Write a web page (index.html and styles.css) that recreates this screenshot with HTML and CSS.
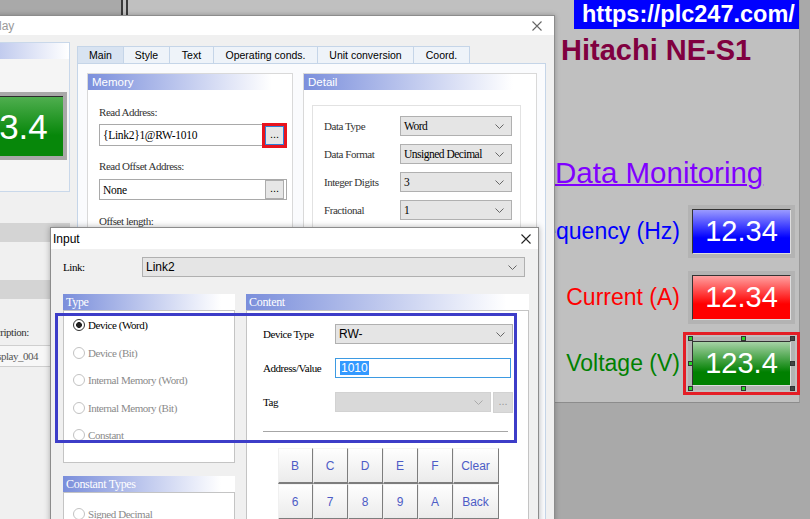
FILE: index.html
```html
<!DOCTYPE html>
<html lang="en">
<head>
  <meta charset="UTF-8">
  <title>Numeric Display - Input</title>
  <link rel="stylesheet" href="styles.css">
</head>
<body>
<div class="screen">

  <!-- HMI screen behind the dialogs -->
  <div class="hmi">
    <div class="hmi-side">
      <div class="url">https://plc247.com/</div>
      <div class="hmi-title">Hitachi NE-S1</div>
      <div class="hmi-head">Data Monitoring</div>
      <div class="mon-row first">
        <span class="mon-label c-blue">Frequency (Hz)</span>
        <div class="val"><div class="val-in v-blue">12.34</div></div>
      </div>
      <div class="mon-row">
        <span class="mon-label c-red">Current (A)</span>
        <div class="val"><div class="val-in v-red">12.34</div></div>
      </div>
      <div class="mon-row">
        <span class="mon-label c-green">Voltage (V)</span>
        <div class="val picked">
          <div class="val-in v-green">123.4</div>
          <span class="hd hd-tl"></span><span class="hd hd-tm"></span><span class="hd hd-tr"></span>
          <span class="hd hd-ml"></span><span class="hd hd-mr"></span>
          <span class="hd hd-bl"></span><span class="hd hd-bm"></span><span class="hd hd-br"></span>
        </div>
      </div>
    </div>
  </div>

  <!-- property dialog -->
  <div class="win win-prop">
    <div class="win-bar">
      <span class="win-title dim">Numeric Display</span>
      <svg class="x" width="10" height="10" viewBox="0 0 10 10"><path d="M0.5 0.5L9.5 9.5M9.5 0.5L0.5 9.5" stroke="#666" stroke-width="1.1"/></svg>
    </div>
    <div class="prop-body">
      <div class="prop-left">
        <div class="preview">
          <div class="preview-head"></div>
          <div class="big-val"><div class="big-val-in">123.4</div></div>
        </div>
        <div class="sec-bar"></div>
        <div class="sec-bar sec-bar2"></div>
        <div class="lbl desc-label">Description:</div>
        <div class="desc-box">Numeric Display_004</div>
      </div>

      <div class="prop-tabs">
        <div class="tabs">
          <div class="tab on w47">Main</div>
          <div class="tab w46">Style</div>
          <div class="tab w44">Text</div>
          <div class="tab w104">Operating conds.</div>
          <div class="tab w96">Unit conversion</div>
          <div class="tab w56">Coord.</div>
        </div>
        <div class="tab-panel">
          <div class="grp grp-mem">
            <div class="grp-head">Memory</div>
            <div class="mem-body">
              <div class="lbl">Read Address:</div>
              <div class="field">{Link2}1@RW-1010<span class="dots focus">...</span></div>
              <div class="lbl mt12">Read Offset Address:</div>
              <div class="field f21">None<span class="dots">...</span></div>
              <div class="lbl mt13">Offset length:</div>
            </div>
          </div>
          <div class="grp grp-det">
            <div class="grp-head">Detail</div>
            <div class="det-box">
              <div class="det-row"><span class="lbl">Data Type</span><div class="sel">Word<svg width="9" height="5"><polyline points="0.5,0.5 4.5,4.5 8.5,0.5" fill="none" stroke="#666"/></svg></div></div>
              <div class="det-row"><span class="lbl">Data Format</span><div class="sel">Unsigned Decimal<svg width="9" height="5"><polyline points="0.5,0.5 4.5,4.5 8.5,0.5" fill="none" stroke="#666"/></svg></div></div>
              <div class="det-row"><span class="lbl">Integer Digits</span><div class="sel">3<svg width="9" height="5"><polyline points="0.5,0.5 4.5,4.5 8.5,0.5" fill="none" stroke="#666"/></svg></div></div>
              <div class="det-row"><span class="lbl">Fractional</span><div class="sel">1<svg width="9" height="5"><polyline points="0.5,0.5 4.5,4.5 8.5,0.5" fill="none" stroke="#666"/></svg></div></div>
            </div>
          </div>
        </div>
      </div>
    </div>
  </div>

  <!-- input dialog -->
  <div class="win win-input">
    <div class="win-bar">
      <span class="win-title">Input</span>
      <svg class="x" width="10" height="10" viewBox="0 0 10 10"><path d="M0.5 0.5L9.5 9.5M9.5 0.5L0.5 9.5" stroke="#222" stroke-width="1.1"/></svg>
    </div>
    <div class="inp-body">
      <div class="link-row">
        <span class="lbl link-lbl">Link:</span>
        <div class="sel sans">Link2<svg width="9" height="5"><polyline points="0.5,0.5 4.5,4.5 8.5,0.5" fill="none" stroke="#666"/></svg></div>
      </div>

      <div class="inp-groups">
        <div class="type-col">
          <div class="ghead">Type</div>
          <div class="gbody type-body">
            <div class="rad on"><i></i>Device (Word)</div>
            <div class="rad"><i></i>Device (Bit)</div>
            <div class="rad"><i></i>Internal Memory (Word)</div>
            <div class="rad"><i></i>Internal Memory (Bit)</div>
            <div class="rad"><i></i>Constant</div>
          </div>
          <div class="ghead mt13">Constant Types</div>
          <div class="gbody const-body">
            <div class="rad"><i></i>Signed Decimal</div>
          </div>
        </div>

        <div class="cont-col">
          <div class="ghead">Content</div>
          <div class="gbody cont-body">
            <div class="c-row">
              <span class="lbl">Device Type</span>
              <div class="sel sans">RW-<svg width="9" height="5"><polyline points="0.5,0.5 4.5,4.5 8.5,0.5" fill="none" stroke="#666"/></svg></div>
            </div>
            <div class="c-row">
              <span class="lbl">Address/Value</span>
              <div class="sel edit"><span class="hl">1010</span></div>
            </div>
            <div class="c-row">
              <span class="lbl">Tag</span>
              <div class="sel dis"><svg width="9" height="5"><polyline points="0.5,0.5 4.5,4.5 8.5,0.5" fill="none" stroke="#aaa"/></svg></div>
              <span class="dots dis">...</span>
            </div>
            <div class="sep"></div>
            <div class="keys">
              <div class="key">B</div><div class="key">C</div><div class="key">D</div>
              <div class="key">E</div><div class="key">F</div><div class="key">Clear</div>
              <div class="key">6</div><div class="key">7</div><div class="key">8</div>
              <div class="key">9</div><div class="key">A</div><div class="key">Back</div>
            </div>
          </div>
        </div>
      </div>
    </div>
    <div class="note-blue"></div>
  </div>

</div>
</body>
</html>
```

FILE: styles.css
```css
* {
  margin: 0;
  padding: 0;
  box-sizing: border-box;
}
body {
  width: 810px;
  height: 519px;
  overflow: hidden;
  font-family: "Liberation Sans", Arial, sans-serif;
  font-size: 12px;
  color: #000;
}
.screen {
  position: relative;
  width: 810px;
  height: 519px;
  overflow: hidden;
  background: #a9a9a9;
}

/* hmi screen */
.hmi {
  position: absolute;
  left: 121px;
  top: 0;
  width: 679px;
  height: 403px;
  background: #c0c0c0;
  border-left: 7px double #3a3a3a;
  border-right: 1px solid #999;
  border-bottom: 1px solid #8c8c8c;
  display: flex;
  justify-content: flex-end;
}
.hmi-side {
  width: 247px;
  display: flex;
  flex-direction: column;
}
.url {
  margin-left: 22px;
  height: 29px;
  background: #0000ff;
  color: #fff;
  font-weight: bold;
  font-size: 23.5px;
  line-height: 29px;
  padding-left: 8px;
  white-space: nowrap;
}
.hmi-title {
  margin-top: 5px;
  padding-left: 9px;
  font-weight: bold;
  font-size: 29px;
  line-height: 33px;
  color: #800040;
}
.hmi-head {
  margin-top: 89px;
  padding-left: 3px;
  font-size: 29.5px;
  line-height: 33px;
  color: #8000ff;
  text-decoration: underline;
  text-decoration-thickness: 2px;
}
.mon-row {
  display: flex;
  justify-content: flex-end;
  align-items: center;
  gap: 8px;
  padding-right: 4px;
  margin-top: 13px;
}
.mon-row.first { margin-top: 16px; }
.mon-label {
  font-size: 23px;
  white-space: nowrap;
  flex-shrink: 0;
}
.c-blue { color: #0000ff; }
.c-red { color: #ff0000; }
.c-green { color: #008000; }
.val {
  position: relative;
  width: 107px;
  height: 53px;
  flex-shrink: 0;
  border: 4px solid #b3b3b3;
}
.val-in {
  height: 100%;
  border-top: 1px solid #333;
  border-left: 1px solid #333;
  border-right: 1px solid #ddd;
  border-bottom: 1px solid #ddd;
  color: #fff;
  font-size: 29px;
  display: flex;
  align-items: center;
  justify-content: center;
}
.v-blue { background: linear-gradient(#9a9aff, #0000ff 65%); }
.v-red { background: linear-gradient(#ffa0a0, #ff0000 65%); }
.v-green { background: linear-gradient(#a6d2a6, #008000 70%); }
.val.picked {
  outline: 3px solid #e41e26;
  outline-offset: 2px;
}
.hd {
  position: absolute;
  width: 5px;
  height: 5px;
  background: #29d629;
  border: 1px solid #333;
}
.hd-tl { left: -4px; top: -5px; }
.hd-tm { left: 49px; top: -5px; }
.hd-tr { right: -4px; top: -5px; background: #444; }
.hd-ml { left: -4px; top: 20px; }
.hd-mr { right: -4px; top: 20px; background: #444; }
.hd-bl { left: -4px; bottom: -5px; }
.hd-bm { left: 49px; bottom: -5px; }
.hd-br { right: -4px; bottom: -5px; background: #444; }

/* windows */
.win {
  position: absolute;
  background: #f0f0f0;
  border: 1px solid #8c8c8c;
  box-shadow: 0 0 5px rgba(0, 0, 0, 0.25);
  display: flex;
  flex-direction: column;
}
.win-bar {
  height: 19px;
  flex-shrink: 0;
  background: #fff;
  display: flex;
  align-items: center;
  justify-content: space-between;
  padding: 0 12px 0 6px;
}
.win-title {
  font-size: 12px;
  white-space: nowrap;
}
.win-title.dim { color: #9a9a9a; }

.win-prop {
  left: -80px;
  top: 15px;
  width: 635px;
  height: 520px;
}
.prop-body {
  flex: 1;
  display: flex;
  gap: 7px;
  padding: 7px 8px 0 4px;
  min-height: 0;
}
.prop-left {
  width: 145px;
  flex-shrink: 0;
  display: flex;
  flex-direction: column;
}
.preview {
  height: 150px;
  border: 1px solid #c9d8ea;
  background: #f5f5f5;
}
.preview-head {
  height: 16px;
  background: linear-gradient(to right, #7f94dc, #fff);
}
.big-val {
  margin: 33px 2px 0 14px;
  height: 68px;
  border: 4px solid #a8a8a8;
}
.big-val-in {
  height: 100%;
  border-top: 1px solid #2c2c2c;
  border-left: 1px solid #2c2c2c;
  background: linear-gradient(#4fae4f, #07870a 65%);
  color: #fff;
  font-size: 35px;
  display: flex;
  align-items: center;
  justify-content: center;
}
.sec-bar {
  height: 19px;
  margin-top: 31px;
  background: #d4d4d4;
}
.sec-bar2 { margin-top: 38px; }
.desc-label {
  margin-top: 25px;
  padding-left: 55px;
}
.desc-box {
  margin: 5px 0 0 20px;
  height: 22px;
  border: 1px solid #cfcfcf;
  background: #f7f7f7;
  padding-left: 4px;
  line-height: 20px;
  font-family: "Liberation Serif", serif;
  font-size: 11px;
  letter-spacing: -0.5px;
  color: #555;
  white-space: nowrap;
}

.lbl {
  font-family: "Liberation Serif", serif;
  font-size: 11px;
  letter-spacing: -0.45px;
  line-height: 16px;
  color: #333;
  white-space: nowrap;
}
.mt12 { margin-top: 12px; }
.mt13 { margin-top: 13px; }

.prop-tabs {
  flex: 1;
  display: flex;
  flex-direction: column;
  padding-top: 4px;
}
.tabs {
  display: flex;
  height: 17px;
}
.tab {
  border-top: 1px solid #c5d5e8;
  border-right: 1px solid #c5d5e8;
  background: #eef3f9;
  font-size: 10.5px;
  display: flex;
  align-items: center;
  justify-content: center;
  white-space: nowrap;
}
.tab:first-child { border-left: 1px solid #c5d5e8; }
.tab.on { background: #d8e3f1; }
.w47 { width: 47px; }
.w46 { width: 46px; }
.w44 { width: 44px; }
.w104 { width: 104px; }
.w96 { width: 96px; }
.w56 { width: 56px; }
.tab-panel {
  flex: 1;
  border: 1px solid #c5d5e8;
  background: #fafbfd;
  display: flex;
  align-items: flex-start;
  gap: 10px;
  padding: 9px 8px 0 9px;
}
.grp {
  border: 1px solid #d9d9d9;
  background: #fff;
}
.grp-head {
  height: 16px;
  background: linear-gradient(to right, #7b8fdc, #fff 90%);
  color: #fff;
  font-size: 11.5px;
  line-height: 16px;
  padding-left: 4px;
}
.grp-mem { width: 206px; }
.grp-det { flex: 1; height: 300px; }
.mem-body {
  padding: 14px 5px 40px 11px;
}
.field {
  margin-top: 4px;
  height: 22px;
  border: 1px solid #a9a9a9;
  background: #fff;
  display: flex;
  align-items: center;
  justify-content: space-between;
  padding: 0 2px 0 3px;
  font-family: "Liberation Serif", serif;
  font-size: 11.5px;
  letter-spacing: -0.3px;
}
.field.f21 {
  height: 21px;
  margin-top: 5px;
}
.dots {
  width: 19px;
  height: 19px;
  flex-shrink: 0;
  border: 1px solid #adadad;
  background: #e6e6e6;
  font-family: "Liberation Sans", Arial, sans-serif;
  font-size: 11px;
  letter-spacing: 0;
  display: flex;
  align-items: center;
  justify-content: center;
  padding-bottom: 3px;
}
.dots.focus {
  border-color: #2e7fd6;
  outline: 3px solid #e8141e;
  outline-offset: 0;
}
.det-box {
  margin: 15px 15px 0 8px;
  border: 1px solid #e2e2e2;
  padding: 10px 8px 30px 11px;
  display: flex;
  flex-direction: column;
  gap: 8px;
}
.det-row {
  display: flex;
  align-items: center;
  height: 20px;
}
.det-row .lbl { width: 76px; }
.sel {
  flex: 1;
  height: 20px;
  border: 1px solid #b0b0b0;
  background: #e5e5e5;
  display: flex;
  align-items: center;
  justify-content: space-between;
  padding: 0 7px 0 3px;
  font-family: "Liberation Serif", serif;
  font-size: 11.5px;
  letter-spacing: -0.5px;
  white-space: nowrap;
}
.sel.sans {
  font-family: "Liberation Sans", Arial, sans-serif;
  font-size: 12px;
  letter-spacing: 0;
}

/* input dialog */
.win-input {
  left: 50px;
  top: 227px;
  width: 489px;
  height: 300px;
  box-shadow: 0 0 6px rgba(0, 0, 0, 0.3);
}
.win-input .win-bar {
  height: 21px;
  padding: 0 7px 0 2px;
}
.inp-body {
  padding: 8px 9px 0 12px;
}
.link-row {
  display: flex;
  align-items: center;
}
.link-lbl { width: 79px; color: #000; }
.link-row .sel { margin-right: 4px; }
.inp-groups {
  display: flex;
  gap: 11px;
  margin-top: 17px;
}
.type-col {
  width: 172px;
  flex-shrink: 0;
}
.cont-col { flex: 1; }
.ghead {
  height: 16px;
  background: linear-gradient(to right, #7a8edb, #fff 92%);
  color: #fff;
  font-family: "Liberation Serif", serif;
  font-size: 12px;
  letter-spacing: -0.3px;
  line-height: 16px;
  padding-left: 3px;
}
.gbody {
  border: 1px solid #c4c4c4;
  background: #fff;
}
.type-body {
  height: 153px;
  padding: 6px 0 0 9px;
  display: flex;
  flex-direction: column;
  gap: 11.5px;
}
.const-body {
  height: 60px;
  padding: 13px 0 0 9px;
}
.rad {
  display: flex;
  align-items: center;
  gap: 3px;
  height: 16px;
  font-family: "Liberation Serif", serif;
  font-size: 11px;
  letter-spacing: -0.45px;
  color: #8a8a8a;
  white-space: nowrap;
}
.rad i {
  width: 12px;
  height: 12px;
  border-radius: 50%;
  border: 1px solid #c2c2c2;
  background: #fff;
}
.rad.on { color: #000; }
.rad.on i {
  border-color: #333;
  background: radial-gradient(circle, #222 0 2.6px, #fff 3.2px);
}
.cont-body {
  height: 260px;
  padding: 13px 15px 0 16px;
}
.c-row {
  display: flex;
  align-items: center;
  height: 20px;
  margin-bottom: 14px;
}
.c-row .lbl { width: 72px; color: #000; }
.sel.edit {
  background: #fff;
  border-color: #3d9ae2;
  margin-right: 2px;
  padding-left: 4px;
}
.hl {
  background: #3399ff;
  color: #fff;
  font-family: "Liberation Sans", Arial, sans-serif;
  font-size: 12px;
  letter-spacing: 0;
  padding: 0 1px;
}
.sel.dis {
  background: #d9d9d9;
  border-color: #d2d2d2;
  justify-content: flex-end;
  margin-right: 2px;
}
.dots.dis {
  width: 20px;
  height: 21px;
  background: #dadada;
  border-color: #d2d2d2;
  color: #999;
}
.sep {
  margin: 19px 5px 0 0;
  height: 1px;
  background: #a6a6a6;
}
.keys {
  margin-top: 16px;
  display: grid;
  grid-template-columns: repeat(5, 35px) 46px;
  grid-auto-rows: 36px;
  justify-content: center;
}
.key {
  background: linear-gradient(#fefefe, #ebebeb);
  border: 1px solid;
  border-color: #f4f4f4 #7d7d7d #7d7d7d #f0f0f0;
  border-bottom-width: 2px;
  color: #4d5cc6;
  font-size: 12px;
  display: flex;
  align-items: center;
  justify-content: center;
}
.note-blue {
  position: absolute;
  left: 4px;
  top: 85px;
  width: 462px;
  height: 130px;
  border: 3px solid #3d3dc8;
}
```
